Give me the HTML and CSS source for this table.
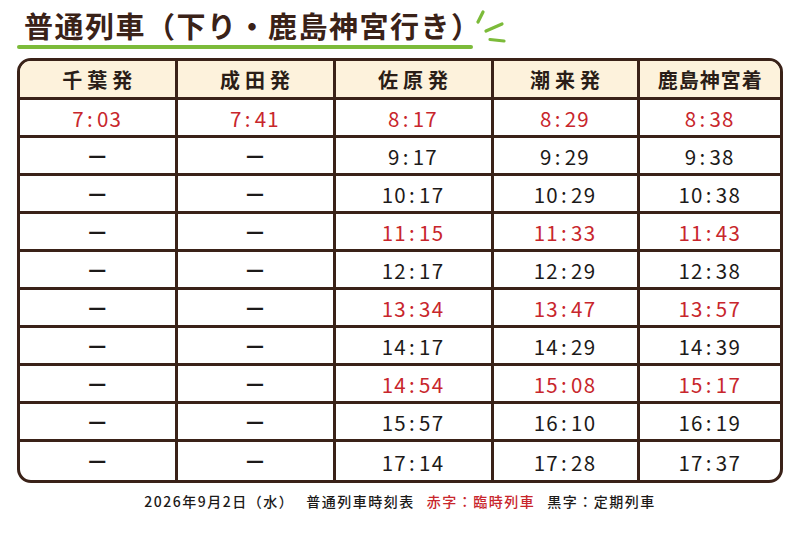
FILE: index.html
```html
<!DOCTYPE html>
<html lang="ja">
<head>
<meta charset="utf-8">
<title>普通列車（下り・鹿島神宮行き）</title>
<link rel="stylesheet" href="styles.css">
</head>
<body>
<header class="title-row">
  <div class="title-wrap">
    <h1 class="title">普通列車（下り・鹿島神宮行き）</h1>
    <div class="underline"></div>
  </div>
  <svg class="deco" width="36" height="46" viewBox="0 0 36 46" aria-hidden="true">
    <path d="M10 12 L5 22" />
    <path d="M13 31 L29 24" />
    <path d="M17 39.5 L31 41" />
  </svg>
</header>

<div class="timetable">
  <div class="cell head">千葉発</div>
  <div class="cell head">成田発</div>
  <div class="cell head">佐原発</div>
  <div class="cell head">潮来発</div>
  <div class="cell head last-col tight">鹿島神宮着</div>

  <div class="cell red">7<i>:</i>03</div>
  <div class="cell red">7<i>:</i>41</div>
  <div class="cell red">8<i>:</i>17</div>
  <div class="cell red">8<i>:</i>29</div>
  <div class="cell red last-col">8<i>:</i>38</div>

  <div class="cell dash">ー</div>
  <div class="cell dash">ー</div>
  <div class="cell">9<i>:</i>17</div>
  <div class="cell">9<i>:</i>29</div>
  <div class="cell last-col">9<i>:</i>38</div>

  <div class="cell dash">ー</div>
  <div class="cell dash">ー</div>
  <div class="cell">10<i>:</i>17</div>
  <div class="cell">10<i>:</i>29</div>
  <div class="cell last-col">10<i>:</i>38</div>

  <div class="cell dash">ー</div>
  <div class="cell dash">ー</div>
  <div class="cell red">11<i>:</i>15</div>
  <div class="cell red">11<i>:</i>33</div>
  <div class="cell red last-col">11<i>:</i>43</div>

  <div class="cell dash">ー</div>
  <div class="cell dash">ー</div>
  <div class="cell">12<i>:</i>17</div>
  <div class="cell">12<i>:</i>29</div>
  <div class="cell last-col">12<i>:</i>38</div>

  <div class="cell dash">ー</div>
  <div class="cell dash">ー</div>
  <div class="cell red">13<i>:</i>34</div>
  <div class="cell red">13<i>:</i>47</div>
  <div class="cell red last-col">13<i>:</i>57</div>

  <div class="cell dash">ー</div>
  <div class="cell dash">ー</div>
  <div class="cell">14<i>:</i>17</div>
  <div class="cell">14<i>:</i>29</div>
  <div class="cell last-col">14<i>:</i>39</div>

  <div class="cell dash">ー</div>
  <div class="cell dash">ー</div>
  <div class="cell red">14<i>:</i>54</div>
  <div class="cell red">15<i>:</i>08</div>
  <div class="cell red last-col">15<i>:</i>17</div>

  <div class="cell dash">ー</div>
  <div class="cell dash">ー</div>
  <div class="cell">15<i>:</i>57</div>
  <div class="cell">16<i>:</i>10</div>
  <div class="cell last-col">16<i>:</i>19</div>

  <div class="cell dash last-row">ー</div>
  <div class="cell dash last-row">ー</div>
  <div class="cell last-row">17<i>:</i>14</div>
  <div class="cell last-row">17<i>:</i>28</div>
  <div class="cell last-row last-col">17<i>:</i>37</div>
</div>

<footer class="note">
  <span>2026年9月2日（水）</span>
  <span class="gap">普通列車時刻表</span>
  <span class="gap note-red">赤字：臨時列車</span>
  <span class="gap">黒字：定期列車</span>
</footer>
</body>
</html>
```

FILE: styles.css
```css
html, body {
  margin: 0;
  padding: 0;
  background: #ffffff;
}

body {
  font-family: "Noto Sans CJK JP", "Noto Sans", sans-serif;
  color: #1c1a19;
  width: 800px;
  height: 533px;
  overflow: hidden;
}

.title-row {
  display: flex;
  align-items: flex-start;
  padding: 0 0 0 17px;
  height: 58px;
}

.title-wrap {
  width: 456px;
  display: flex;
  flex-direction: column;
}

.title {
  margin: 8px 0 0 0;
  padding-left: 7px;
  font-size: 29px;
  line-height: 34px;
  font-weight: 700;
  letter-spacing: 1.5px;
  color: #3a2218;
  white-space: nowrap;
}

.underline {
  margin-top: 3px;
  height: 4px;
  border-radius: 2px;
  background: #7cbb3a;
}

.deco {
  flex: none;
}

.deco path {
  stroke: #7cbb3a;
  stroke-width: 3.2;
  stroke-linecap: round;
  fill: none;
}

.timetable {
  margin: 0 17px;
  width: 766px;
  box-sizing: border-box;
  border: 3px solid #3a2218;
  border-radius: 14px;
  overflow: hidden;
  display: grid;
  grid-template-columns: 157.5px 158px 158px 146px 1fr;
  grid-auto-rows: 38px;
  grid-template-rows: 39px;
}

.cell {
  box-sizing: border-box;
  border-right: 3px solid #3a2218;
  border-bottom: 3px solid #3a2218;
  display: flex;
  align-items: center;
  justify-content: center;
  font-size: 20.5px;
  font-weight: 400;
  letter-spacing: 1.3px;
  color: #1c1a19;
  padding-top: 1px;
}

.cell i {
  font-style: normal;
  margin: 0 3px 0 2px;
}

.cell.last-col {
  border-right: none;
}

.cell.last-row {
  border-bottom: none;
}

.cell.head {
  background: #fdf2dc;
  font-weight: 700;
  font-size: 20px;
  letter-spacing: 5px;
  padding-left: 5px;
  color: #2a1d17;
}

.cell.head.tight {
  letter-spacing: 1px;
  padding-left: 1px;
}

.cell.red {
  color: #c8262c;
}

.cell.dash {
  font-size: 20px;
  font-weight: 500;
  letter-spacing: 0;
}

.note {
  display: flex;
  justify-content: center;
  margin-top: 8px;
  font-size: 14px;
  line-height: 20px;
  font-weight: 500;
  letter-spacing: 1.5px;
  color: #1c1a19;
}

.note .gap {
  margin-left: 12px;
}

.note .note-red {
  color: #c8262c;
}
```
